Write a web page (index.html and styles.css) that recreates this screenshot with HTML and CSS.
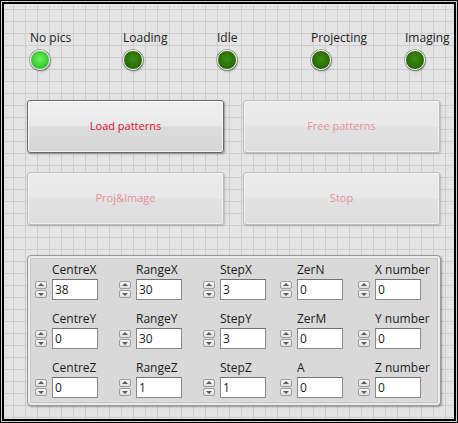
FILE: index.html
```html
<!DOCTYPE html>
<html>
<head>
<meta charset="utf-8">
<link rel="stylesheet" href="styles.css">
</head>
<body>
<div class="frame">
  <div class="panel">
    <div class="leds">
      <div class="led-item"><span class="lbl">No pics</span><span class="led on"></span></div>
      <div class="led-item"><span class="lbl">Loading</span><span class="led"></span></div>
      <div class="led-item"><span class="lbl">Idle</span><span class="led"></span></div>
      <div class="led-item"><span class="lbl">Projecting</span><span class="led"></span></div>
      <div class="led-item"><span class="lbl">Imaging</span><span class="led"></span></div>
    </div>
    <div class="buttons">
      <div class="btn active">Load patterns</div>
      <div class="btn disabled">Free patterns</div>
      <div class="btn disabled">Proj&amp;Image</div>
      <div class="btn disabled">Stop</div>
    </div>
    <div class="cluster">
      <div class="ctl"><span class="lbl">CentreX</span><div class="num"><span class="spin"><i class="arr up"></i><i class="arr dn"></i></span><span class="box">38</span></div></div>
      <div class="ctl"><span class="lbl">RangeX</span><div class="num"><span class="spin"><i class="arr up"></i><i class="arr dn"></i></span><span class="box">30</span></div></div>
      <div class="ctl"><span class="lbl">StepX</span><div class="num"><span class="spin"><i class="arr up"></i><i class="arr dn"></i></span><span class="box">3</span></div></div>
      <div class="ctl"><span class="lbl">ZerN</span><div class="num"><span class="spin"><i class="arr up"></i><i class="arr dn"></i></span><span class="box">0</span></div></div>
      <div class="ctl"><span class="lbl">X number</span><div class="num"><span class="spin"><i class="arr up"></i><i class="arr dn"></i></span><span class="box">0</span></div></div>

      <div class="ctl"><span class="lbl">CentreY</span><div class="num"><span class="spin"><i class="arr up"></i><i class="arr dn"></i></span><span class="box">0</span></div></div>
      <div class="ctl"><span class="lbl">RangeY</span><div class="num"><span class="spin"><i class="arr up"></i><i class="arr dn"></i></span><span class="box">30</span></div></div>
      <div class="ctl"><span class="lbl">StepY</span><div class="num"><span class="spin"><i class="arr up"></i><i class="arr dn"></i></span><span class="box">3</span></div></div>
      <div class="ctl"><span class="lbl">ZerM</span><div class="num"><span class="spin"><i class="arr up"></i><i class="arr dn"></i></span><span class="box">0</span></div></div>
      <div class="ctl"><span class="lbl">Y number</span><div class="num"><span class="spin"><i class="arr up"></i><i class="arr dn"></i></span><span class="box">0</span></div></div>

      <div class="ctl"><span class="lbl">CentreZ</span><div class="num"><span class="spin"><i class="arr up"></i><i class="arr dn"></i></span><span class="box">0</span></div></div>
      <div class="ctl"><span class="lbl">RangeZ</span><div class="num"><span class="spin"><i class="arr up"></i><i class="arr dn"></i></span><span class="box">1</span></div></div>
      <div class="ctl"><span class="lbl">StepZ</span><div class="num"><span class="spin"><i class="arr up"></i><i class="arr dn"></i></span><span class="box">1</span></div></div>
      <div class="ctl"><span class="lbl">A</span><div class="num"><span class="spin"><i class="arr up"></i><i class="arr dn"></i></span><span class="box">0</span></div></div>
      <div class="ctl"><span class="lbl">Z number</span><div class="num"><span class="spin"><i class="arr up"></i><i class="arr dn"></i></span><span class="box">0</span></div></div>
    </div>
  </div>
</div>
</body>
</html>
```
FILE: styles.css
```css
html, body {
  margin: 0;
  padding: 0;
  background: #e4e4e4;
}
body {
  font-family: "Open Sans", "Noto Sans", sans-serif;
  font-size: 12px;
  color: #1c1c1c;
}
.frame {
  width: 458px;
  height: 423px;
  box-sizing: border-box;
  border: 1px solid #000;
  padding: 1px;
  background: #d2d2d2;
}
.panel {
  height: 100%;
  box-sizing: border-box;
  border: 2px solid #000;
  background-color: #e4e4e4;
  background-image:
    linear-gradient(to right, #cdcdcd 1px, transparent 1px),
    linear-gradient(to bottom, #cdcdcd 1px, transparent 1px);
  background-size: 12px 12px;
  background-position: 9px 5px;
  padding: 26px 0 0 23px;
}
.lbl {
  display: block;
  line-height: 15px;
  white-space: nowrap;
}
.leds {
  display: grid;
  grid-template-columns: 93px 94px 94px 94px auto;
  padding-left: 3px;
}
.led-item {
  display: flex;
  flex-direction: column;
  align-items: flex-start;
}
.led {
  display: block;
  margin-top: 5px;
  width: 20px;
  height: 20px;
  box-sizing: border-box;
  border-radius: 50%;
  border: 1.5px solid #eef4ea;
  background: radial-gradient(circle at 50% 45%, #3f8e12 0%, #2f760a 45%, #1d5600 100%);
  box-shadow: 0 0 0 0.8px rgba(60, 60, 60, 0.45), 1px 1.5px 2px rgba(0, 0, 0, 0.3);
}
.led.on {
  background: radial-gradient(circle at 50% 45%, #6cf05a 0%, #48d43c 45%, #24a824 100%);
}
.buttons {
  display: grid;
  grid-template-columns: 197px 197px;
  grid-auto-rows: 53px;
  column-gap: 19px;
  row-gap: 19px;
  margin-top: 30px;
}
.btn {
  box-sizing: border-box;
  display: flex;
  align-items: center;
  justify-content: center;
  border-radius: 3px;
  font-size: 11px;
  padding-bottom: 2px;
}
.btn.active {
  border: 1px solid #6a6a6a;
  color: #d8102a;
  background: linear-gradient(to bottom, #f0f0f0 0%, #e9e9e9 48%, #dcdcdc 52%, #d6d6d6 100%);
  box-shadow: inset 0 0 0 1px rgba(255, 255, 255, 0.7), 1px 1px 2px rgba(0, 0, 0, 0.35);
}
.btn.disabled {
  border: 1px solid #bcbcbc;
  color: #e8919a;
  background: linear-gradient(to bottom, #ececec 0%, #e8e8e8 48%, #e1e1e1 52%, #dedede 100%);
  box-shadow: inset 0 0 0 1px rgba(255, 255, 255, 0.5), 1px 1px 2px rgba(0, 0, 0, 0.18);
}
.cluster {
  box-sizing: border-box;
  width: 414px;
  height: 151px;
  margin-top: 30px;
  border: 1px solid #9a9a9a;
  border-radius: 4px;
  background: #d9d9d9;
  box-shadow: inset 0 0 0 2px #ececec, inset 0 0 0 3px #c6c6c6, 1px 1px 2px rgba(0, 0, 0, 0.35);
  padding: 6px 0 0 7px;
  display: grid;
  grid-template-columns: 84px 84px 77px 78px auto;
  grid-auto-rows: 38px;
  row-gap: 11px;
}
.ctl .lbl {
  padding-left: 17px;
  margin-bottom: 2px;
}
.num {
  display: flex;
  align-items: center;
}
.spin {
  display: flex;
  flex-direction: column;
  width: 12px;
  margin-right: 5px;
}
.arr {
  display: block;
  position: relative;
  height: 8px;
  box-sizing: border-box;
  border: 1px solid #9e9e9e;
  border-radius: 2px;
  background: linear-gradient(to bottom, #f7f7f7, #dedede);
}
.arr.dn {
  margin-top: 1px;
}
.arr::after {
  content: "";
  position: absolute;
  left: 2px;
  width: 0;
  height: 0;
  border-left: 3px solid transparent;
  border-right: 3px solid transparent;
}
.arr.up::after {
  top: 1px;
  border-bottom: 3px solid #5a5a5a;
}
.arr.dn::after {
  top: 2px;
  border-top: 3px solid #5a5a5a;
}
.box {
  display: block;
  box-sizing: border-box;
  width: 46px;
  height: 21px;
  background: #fff;
  border: 1px solid #8a8a8a;
  border-top-color: #727272;
  padding-left: 2px;
  line-height: 19px;
}
```
